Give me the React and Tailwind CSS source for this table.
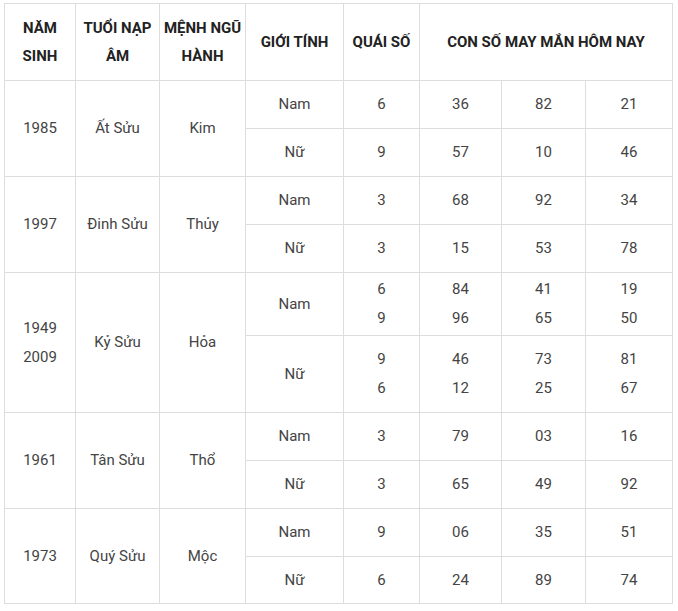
const rows = [
  {
    year: ["1985"],
    tuoi: "Ất Sửu",
    menh: "Kim",
    sub: [
      { h: "h-[48px]", gt: "Nam", qs: ["6"], nums: [["36"], ["82"], ["21"]] },
      { h: "h-[48px]", gt: "Nữ", qs: ["9"], nums: [["57"], ["10"], ["46"]] },
    ],
  },
  {
    year: ["1997"],
    tuoi: "Đinh Sửu",
    menh: "Thủy",
    sub: [
      { h: "h-[48px]", gt: "Nam", qs: ["3"], nums: [["68"], ["92"], ["34"]] },
      { h: "h-[48px]", gt: "Nữ", qs: ["3"], nums: [["15"], ["53"], ["78"]] },
    ],
  },
  {
    year: ["1949", "2009"],
    tuoi: "Kỷ Sửu",
    menh: "Hỏa",
    sub: [
      { h: "h-[63px]", gt: "Nam", qs: ["6", "9"], nums: [["84", "96"], ["41", "65"], ["19", "50"]] },
      { h: "h-[77px]", gt: "Nữ", qs: ["9", "6"], nums: [["46", "12"], ["73", "25"], ["81", "67"]] },
    ],
  },
  {
    year: ["1961"],
    tuoi: "Tân Sửu",
    menh: "Thổ",
    sub: [
      { h: "h-[48px]", gt: "Nam", qs: ["3"], nums: [["79"], ["03"], ["16"]] },
      { h: "h-[48px]", gt: "Nữ", qs: ["3"], nums: [["65"], ["49"], ["92"]] },
    ],
  },
  {
    year: ["1973"],
    tuoi: "Quý Sửu",
    menh: "Mộc",
    sub: [
      { h: "h-[48px]", gt: "Nam", qs: ["9"], nums: [["06"], ["35"], ["51"]] },
      { h: "h-[47px]", gt: "Nữ", qs: ["6"], nums: [["24"], ["89"], ["74"]] },
    ],
  },
]

function Lines({ items }) {
  return (
    <div className="flex flex-col items-center leading-[29px]">
      {items.map((t, i) => (
        <span key={i}>{t}</span>
      ))}
    </div>
  )
}

const td = "border border-[#dddddd] text-center align-middle p-0"

export default function App() {
  return (
    <div className="bg-white w-[678px] h-[611px] pt-[3px] pl-[4px] font-['Roboto',sans-serif] text-[15px] text-[#444444]">
      <table className="table-fixed border-collapse w-[668px]">
        <colgroup>
          <col className="w-[71px]" />
          <col className="w-[84px]" />
          <col className="w-[86px]" />
          <col className="w-[98px]" />
          <col className="w-[76px]" />
          <col className="w-[82px]" />
          <col className="w-[84px]" />
          <col className="w-[87px]" />
        </colgroup>
        <thead>
          <tr className="h-[77px] font-bold leading-[28px] text-[#222222]">
            <th className={td}>NĂM<br />SINH</th>
            <th className={td}>TUỔI NẠP<br />ÂM</th>
            <th className={td}>MỆNH NGŨ<br />HÀNH</th>
            <th className={td}>GIỚI TÍNH</th>
            <th className={td}>QUÁI SỐ</th>
            <th className={td} colSpan={3}>CON SỐ MAY MẮN HÔM NAY</th>
          </tr>
        </thead>
        <tbody>
          {rows.map((r) =>
            r.sub.map((s, i) => (
              <tr key={r.tuoi + i} className={s.h}>
                {i === 0 && (
                  <>
                    <td className={td} rowSpan={2}><Lines items={r.year} /></td>
                    <td className={td} rowSpan={2}>{r.tuoi}</td>
                    <td className={td} rowSpan={2}>{r.menh}</td>
                  </>
                )}
                <td className={td}>{s.gt}</td>
                <td className={td}><Lines items={s.qs} /></td>
                {s.nums.map((n, j) => (
                  <td key={j} className={td}><Lines items={n} /></td>
                ))}
              </tr>
            ))
          )}
        </tbody>
      </table>
    </div>
  )
}
